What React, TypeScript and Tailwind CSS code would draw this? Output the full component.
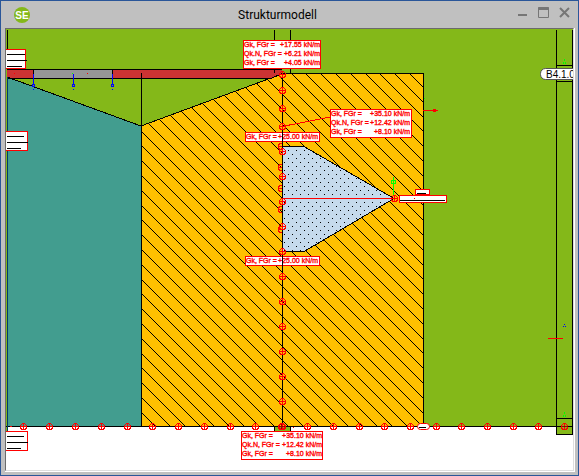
import { ReactNode } from "react";

type LoadRow = { label: string; value: string };

type LoadBox = {
  x: number;
  y: number;
  width: number;
  height: number;
  valueEnd: number;
  rows: LoadRow[];
};

const LOADS_TOP: LoadBox = {
  x: 243,
  y: 40,
  width: 77,
  height: 28,
  valueEnd: 320,
  rows: [
    { label: "Gk, FGr =", value: "+17.55 kN/m" },
    { label: "Qk.N, FGr =", value: "+6.21 kN/m" },
    { label: "Gk, FGr =", value: "+4.05 kN/m" },
  ],
};

const LOADS_RIGHT: LoadBox = {
  x: 330,
  y: 109,
  width: 81,
  height: 28,
  valueEnd: 410,
  rows: [
    { label: "Gk, FGr =", value: "+35.10 kN/m" },
    { label: "Qk.N, FGr =", value: "+12.42 kN/m" },
    { label: "Gk, FGr =", value: "+8.10 kN/m" },
  ],
};

const LOADS_BOTTOM: LoadBox = {
  ...LOADS_RIGHT,
  x: 241,
  y: 431,
  valueEnd: 322,
};

const OPENING_TOP: LoadBox = {
  x: 245,
  y: 132,
  width: 74,
  height: 9,
  valueEnd: 318,
  rows: [{ label: "Gk, FGr =", value: "+25.00 kN/m" }],
};

const OPENING_BOTTOM: LoadBox = { ...OPENING_TOP, y: 256 };

const WALL_NODES = [
  74, 90, 108, 126, 151, 176, 201, 226, 251, 276, 301, 326, 351, 376, 401, 426,
];
const HIDDEN_NODES = [146, 167, 188, 209, 229];
const BASE_NODES = [
  23, 49, 75, 101, 127, 152, 178, 204, 230, 255, 281, 307, 333, 359, 384, 410,
  436, 461, 487, 513, 538, 564,
];

const HATCH_STEP = 14.8;
const HATCH_LINES = Array.from({ length: 50 }, (_, i) =>
  Math.round(63.5 - HATCH_STEP * (i - 21)),
);

const LoadLabel = ({ box }: { box: LoadBox }) => (
  <g>
    <rect
      x={box.x + 0.5}
      y={box.y + 0.5}
      width={box.width}
      height={box.height}
      fill="#fff"
      stroke="#f00"
      shapeRendering="crispEdges"
    />
    {box.rows.map((row, i) => (
      <g
        key={i}
        className="fill-[#f00] font-['Liberation_Sans',sans-serif] text-[7px]"
        stroke="#f00"
        strokeWidth="0.35"
      >
        <text x={box.x + 1} y={box.y + 7 + i * 9}>
          {row.label}
        </text>
        <text x={box.valueEnd} y={box.y + 7 + i * 9} textAnchor="end">
          {row.value}
        </text>
      </g>
    ))}
  </g>
);

// collapsed label: only the strokes of its rows are left
const CollapsedLabel = ({
  y,
  width,
  ends,
}: {
  y: number;
  width: number;
  ends: number[];
}) => (
  <g shapeRendering="crispEdges">
    <rect x="5.5" y={y + 0.5} width={width} height="19" fill="#fff" stroke="#f00" />
    {ends.map((end, i) => (
      <path key={i} d={`M7 ${y + 5.5 + i * 6}H${end}`} stroke="#000" />
    ))}
  </g>
);

const Node = ({ x, y }: { x: number; y: number }) => (
  <g stroke="#f00" fill="none" shapeRendering="crispEdges">
    <circle cx={x + 0.5} cy={y + 0.5} r="3" />
    <path d={`M${x - 3} ${y + 0.5}h7M${x + 0.5} ${y - 3}v7`} />
  </g>
);

const Support = ({ x }: { x: number }) => (
  <g stroke="#00f" fill="none" shapeRendering="crispEdges">
    <path d={`M${x + 0.5} 74v10M${x} 89.5h1`} />
    <rect x={x - 0.5} y="84.5" width="2" height="2" />
  </g>
);

const StructureDrawing = () => (
  <svg
    viewBox="6 29 567 441"
    className="block h-auto w-full bg-white"
    role="img"
    aria-label="Strukturmodell"
  >
    <defs>
      <clipPath id="slab">
        <path d="M141 126L274 77L282 73H423V426H141Z" />
      </clipPath>
      <pattern id="dots" width="8" height="8" patternUnits="userSpaceOnUse">
        <rect width="8" height="8" fill="#c5daec" />
        <rect x="0" y="6" width="1" height="1" fill="#000" />
        <rect x="4" y="2" width="1" height="1" fill="#000" />
      </pattern>
    </defs>

    <g shapeRendering="crispEdges">
      <rect x="6" y="29" width="567" height="397" fill="#84b819" />
      <rect x="6" y="426" width="1" height="5" fill="#84b819" />
      <rect x="274.5" y="426.5" width="16" height="5" fill="#84b819" stroke="#000" />
      <path d="M7 77L141 126V426H7Z" fill="#429d8f" />
      <path d="M141 126L274 77L282 73H423V426H141Z" fill="#ffc000" />

      <g clipPath="url(#slab)" stroke="#000">
        {HATCH_LINES.map((offset) => (
          <path key={offset} d={`M100 ${offset + 100}l400 400`} />
        ))}
      </g>

      <path
        d="M282.5 146.5H304L394 198.5L304 251.5H282.5Z"
        fill="url(#dots)"
        stroke="#000"
      />

      {/* beam */}
      <path d="M7 69H282V74L271 78H7Z" fill="#cc3333" />
      <rect x="33" y="69" width="79" height="9" fill="#969696" />
      <path
        d="M7 69.5H282M7 78.5H271L282 73.5H423.5V426M7 77L141 126L271 78"
        stroke="#000"
        fill="none"
      />
      <path d="M33.5 69v9M112.5 69v9" stroke="#000" />
      <path d="M72 73.5h1" stroke="#0f0" />
      <path d="M14 73.5h1M87 73.5h1" stroke="#f00" />

      {/* axes */}
      <path d="M7.5 30V69M141.5 73V426M274.5 30V73M290.5 30V73M6 426.5H573" stroke="#000" />
      <path d="M7.5 77V431" stroke="#003c6b" />

      {/* column on the right */}
      <rect x="556" y="426" width="17" height="8" fill="#84b819" />
      <path
        d="M556.5 30V434.5M572.5 30V434.5M556 434.5H573M556 418.5H573M556 426.5H573M556 65.5H573M556 81.5H573"
        stroke="#000"
      />
      <path d="M548 338.5h15" stroke="#f00" />
      <path d="M563 326.5h1M565 326.5h1M564 324.5h1" stroke="#00f" />
      <path d="M564.5 59v2M563.5 62v2M565.5 62v2M564.5 412v2M563.5 415v2M565.5 415v2M424.5 98v1" stroke="#0f0" />

      <path d="M282 198.5H398M423 110.5H438M282 126.5L330 117" stroke="#f00" />
      <rect x="433.5" y="109.5" width="2" height="2" fill="none" stroke="#f00" />
    </g>

    <Support x={33} />
    <Support x={73} />
    <Support x={112} />

    <LoadLabel box={LOADS_TOP} />
    <LoadLabel box={LOADS_RIGHT} />
    <LoadLabel box={OPENING_TOP} />
    <LoadLabel box={OPENING_BOTTOM} />

    <path d="M282.5 73V426" stroke="#000" shapeRendering="crispEdges" />
    {HIDDEN_NODES.map((y) => (
      <path
        key={y}
        d={`M282 ${y - 2.5}h-2l-1.500 1.500v3l1.500 1.500h2M279 ${y + 0.5}h3`}
        stroke="#f00"
        fill="none"
        shapeRendering="crispEdges"
      />
    ))}
    {WALL_NODES.map((y) => (
      <Node key={y} x={282} y={y} />
    ))}
    {BASE_NODES.map((x) => (
      <Node key={x} x={x} y={426} />
    ))}
    <path d="M279 426.5h6M281.500 424v5M562 426.5h6" stroke="#900" />
    <path d="M293 427.5h1M10 426.5h2" stroke="#f00" />

    {/* opening tip */}
    <g shapeRendering="crispEdges">
      <path d="M393.5 177V196M391.5 183V180.500H395.5V183Z" stroke="#0f0" fill="none" />
      <rect x="415.5" y="189.5" width="14" height="5" rx="1" fill="#fff" stroke="#f00" />
      <path d="M417 193.5h9" stroke="#000" />
      <rect x="399.5" y="195.5" width="47" height="7" fill="#fff" stroke="#f00" />
      <path d="M400 200.5h45" stroke="#000" />
      <path d="M414 198.5h1" stroke="#f00" />
    </g>
    <Node x={394} y={198} />
    <rect x="417.5" y="423.5" width="12" height="6" rx="3" fill="#fff" stroke="#f00" />
    <path d="M419 427.5h7" stroke="#000" shapeRendering="crispEdges" />

    <CollapsedLabel y={49} width={20} ends={[25, 27, 22]} />
    <CollapsedLabel y={131} width={22} ends={[24, 28, 21]} />
    <CollapsedLabel y={431} width={22} ends={[24, 28, 21]} />
    <LoadLabel box={LOADS_BOTTOM} />

    <rect x="540.5" y="68.5" width="50" height="11" rx="5" fill="#fff" stroke="#555" />
    <text x="546" y="78" className="fill-black font-['Liberation_Sans',sans-serif] text-[10px]">
      B4.1.0
    </text>
  </svg>
);

const WindowButton = ({
  label,
  children,
}: {
  label: string;
  children: ReactNode;
}) => (
  <button
    type="button"
    aria-label={label}
    className="flex h-5 w-[21px] items-center justify-center"
  >
    <svg
      viewBox="0 0 11 11"
      className="size-[11px]"
      fill="none"
      stroke="#767676"
      strokeWidth="2"
    >
      {children}
    </svg>
  </button>
);

const Logo = () => (
  <svg viewBox="0 0 16 16" className="size-4" role="img" aria-label="SE">
    <circle cx="8" cy="8" r="8" fill="#84b819" />
    <text
      x="8"
      y="12"
      textAnchor="middle"
      className="fill-white font-['Liberation_Sans',sans-serif] text-[10px] font-bold"
    >
      SE
    </text>
  </svg>
);

const App = () => {
  return (
    <div className="border border-[#2a5699] bg-[#c0c0c0] pr-[3px] pb-[3px] pl-1">
      <header className="flex h-[27px] items-center">
        <div className="flex w-8 justify-center pl-0.5">
          <Logo />
        </div>
        <h1 className="flex-1 pl-1.5 text-center font-[Roboto,sans-serif] text-[12px] text-black">
          Strukturmodell
        </h1>
        <div className="flex pb-1">
          <WindowButton label="Minimieren">
            <path d="M1 8h9" />
          </WindowButton>
          <WindowButton label="Maximieren">
            <path d="M0.500 1.500h10" strokeWidth="3" />
            <path d="M0.500 0.500h10v10h-10z" strokeWidth="1" />
          </WindowButton>
          <WindowButton label="Schließen">
            <path d="M1 1l9 9M10 1l-9 9" />
          </WindowButton>
        </div>
      </header>
      <main className="border-r border-b border-white">
        <div className="border border-t-[#6b6b6b] border-r-[#dedede] border-b-[#dedede] border-l-[#6b6b6b]">
          <StructureDrawing />
        </div>
      </main>
    </div>
  );
};

export default App;
